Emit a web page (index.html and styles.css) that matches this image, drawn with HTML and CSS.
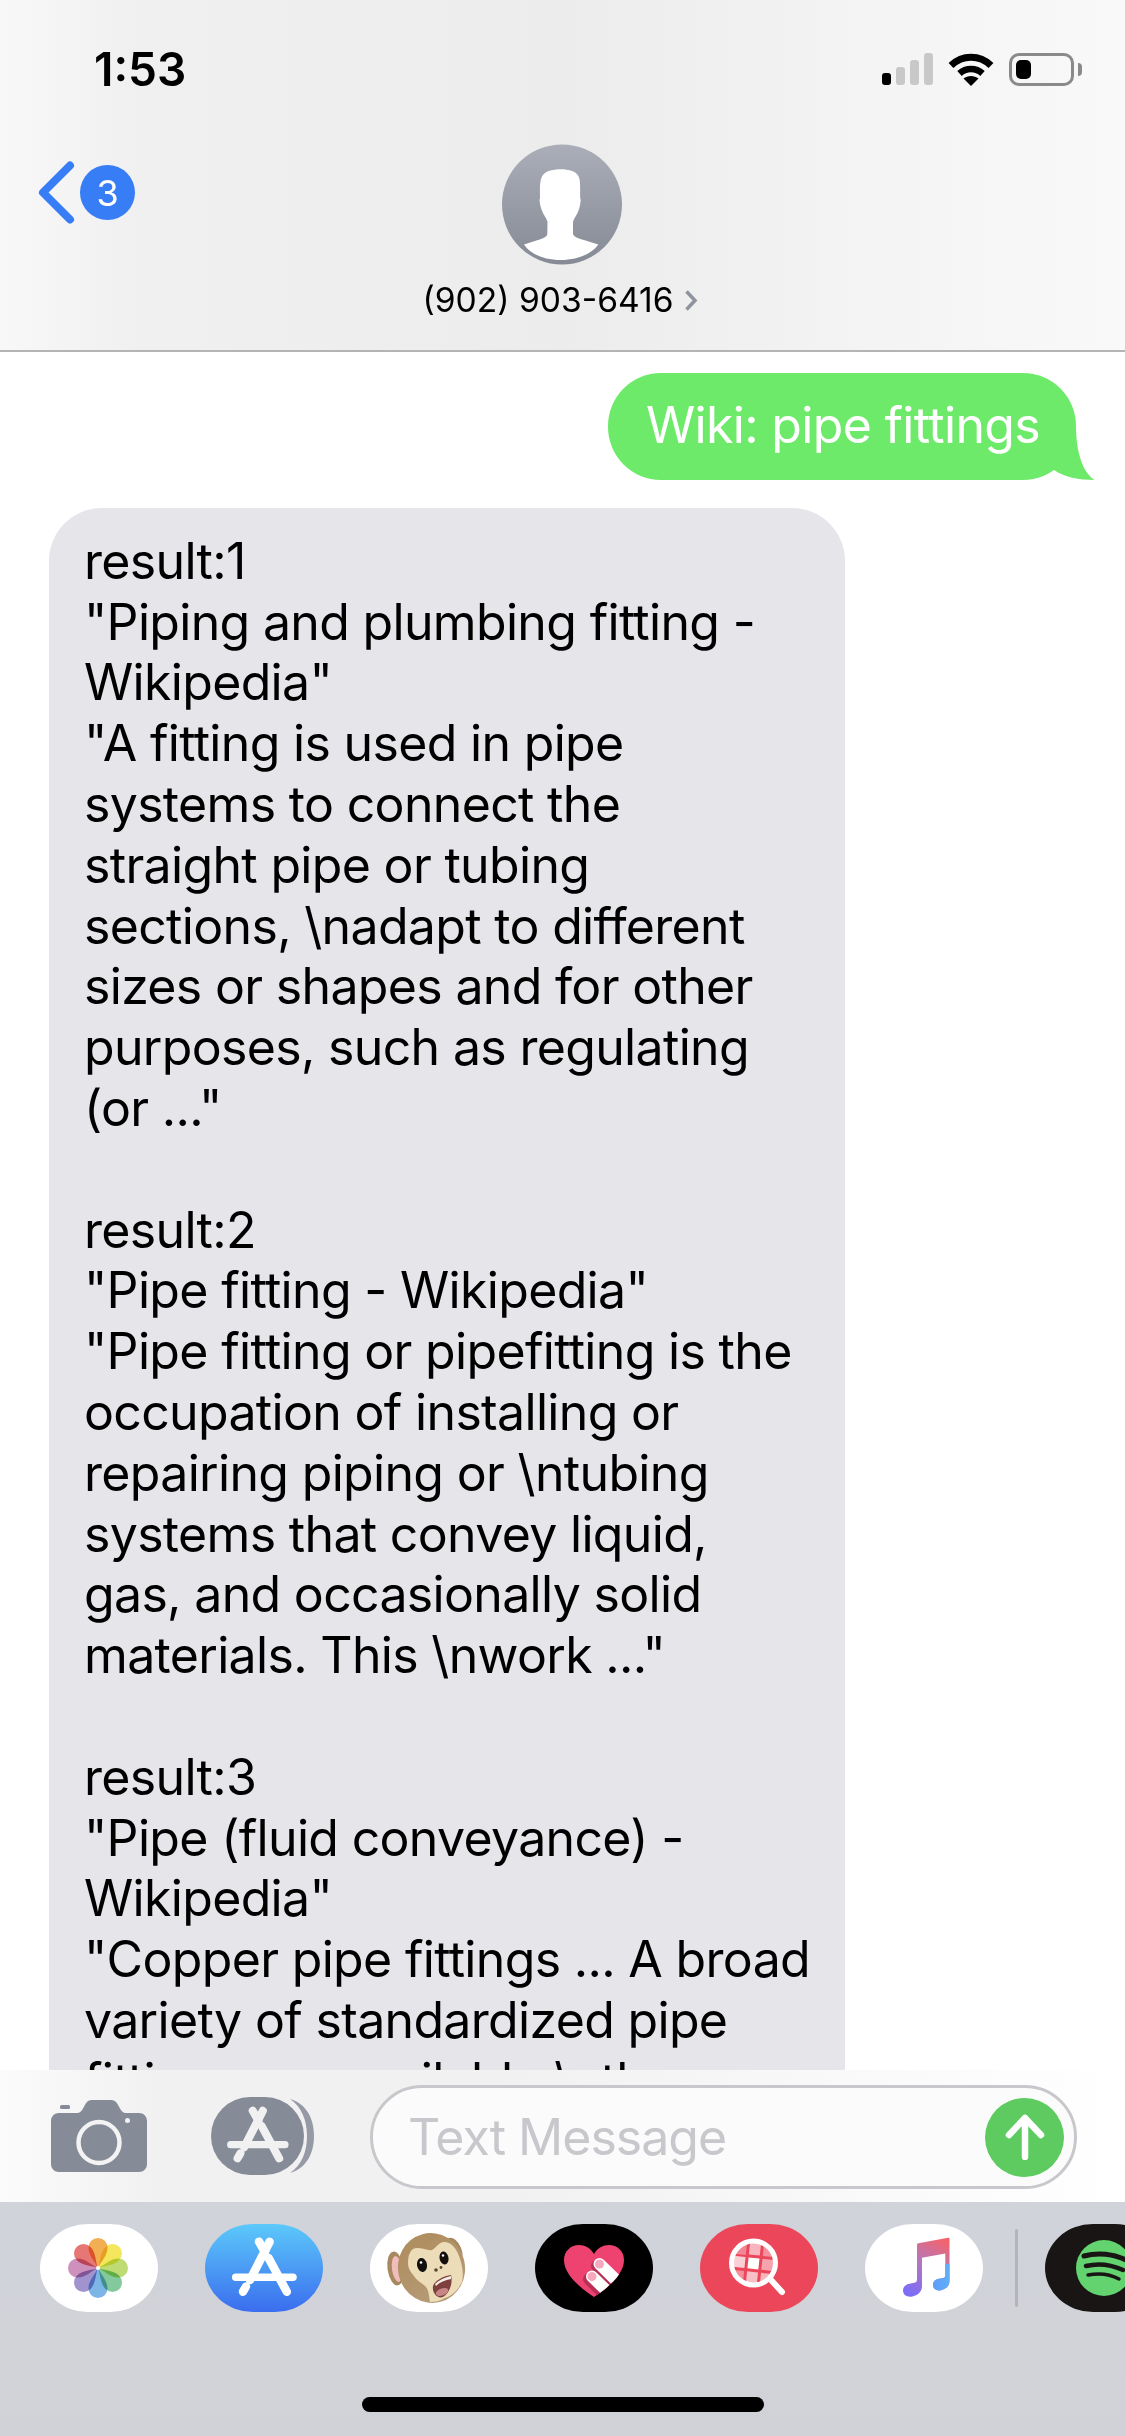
FILE: index.html
```html
<!DOCTYPE html>
<html lang="en">
<head>
    <meta charset="UTF-8">
    <meta name="viewport" content="width=device-width, initial-scale=1.0">
    <title>Messages</title>
    <link rel="stylesheet" href="styles.css">
</head>
<body>
    <svg class="defs" width="0" height="0">
        <defs>
            <symbol id="appstore" viewBox="0 0 118 88">
                <g fill="none" stroke="currentColor" stroke-width="8.5" stroke-linecap="round">
                    <path d="M54 17.7L60 28"/>
                    <path d="M64.6 17.7L45 56"/>
                    <path d="M63.6 34L81.8 67.7"/>
                    <path d="M41 62.5L38 67.7"/>
                    <path d="M30.7 53.3H88" stroke-width="7.5"/>
                </g>
            </symbol>
            <linearGradient id="avatarFill" x1="0" y1="0" x2="0" y2="1">
                <stop offset="0" stop-color="#abaeb9"/>
                <stop offset="1" stop-color="#858a95"/>
            </linearGradient>
            <linearGradient id="noteFill" x1="0.75" y1="0" x2="0.35" y2="1">
                <stop offset="0" stop-color="#f2636c"/>
                <stop offset="0.45" stop-color="#b877b8"/>
                <stop offset="1" stop-color="#7f6df5"/>
            </linearGradient>
            <linearGradient id="noteHead" x1="0" y1="0" x2="1" y2="0">
                <stop offset="0" stop-color="#5f9cf8"/>
                <stop offset="1" stop-color="#5fb0f8"/>
            </linearGradient>
            <linearGradient id="monkeyFill" x1="0" y1="0" x2="0.3" y2="1">
                <stop offset="0" stop-color="#ae8c5c"/>
                <stop offset="1" stop-color="#b59a76"/>
            </linearGradient>
        </defs>
    </svg>

    <header class="top-bar">
        <div class="status-bar">
            <span class="clock">1:53</span>
            <div class="status-icons">
                <div class="signal">
                    <span class="bar bar-1 on"></span>
                    <span class="bar bar-2"></span>
                    <span class="bar bar-3"></span>
                    <span class="bar bar-4"></span>
                </div>
                <svg class="wifi" width="46" height="33" viewBox="0 0 46 33">
                    <path d="M3 12.500C14.500 1.500 31.500 1.500 43 12.500" fill="none" stroke="#000" stroke-width="7"/>
                    <path d="M11.500 20.500C18 14.500 28 14.500 34.500 20.500" fill="none" stroke="#000" stroke-width="6.500"/>
                    <path d="M23 33L15.500 25.500C19.500 22 26.500 22 30.500 25.500Z" fill="#000"/>
                </svg>
                <div class="battery">
                    <div class="battery-body"><span class="battery-level"></span></div>
                    <span class="battery-nub"></span>
                </div>
            </div>
        </div>
        <nav class="nav-row">
            <div class="back">
                <svg class="back-arrow" width="37" height="63" viewBox="0 0 37 63">
                    <path d="M32 4.500L5 31.500L32 58.500" fill="none" stroke="#377df6" stroke-width="8" stroke-linecap="round" stroke-linejoin="round"/>
                </svg>
                <span class="badge">3</span>
            </div>
            <div class="contact">
                <svg class="avatar" width="120" height="121" viewBox="0 0 120 121">
                    <circle cx="60" cy="60.500" r="60" fill="url(#avatarFill)"/>
                    <path d="M58.700 25.300C66 25.300 76 27 77.500 35C78.500 41 78 48 78.200 54L78.700 56C78.200 62 77 66 75 70C73.500 73 71.500 75 71 78L71 90C72 93 76 94.500 82 96L96.300 100.500C90 110 75 116 58.700 116C42 116 28 110 22 100.500L36 96C41 94.500 45 93 45.300 90L45.500 78C45 75 43 73 41.500 70C39.500 66 38 62 37.500 56L38 54C38 48 37.500 41 39 35C41 27 51 25.300 58.700 25.300Z" fill="#fff"/>
                </svg>
                <div class="contact-name">
                    <span>(902) 903-6416</span>
                    <svg width="14" height="21" viewBox="0 0 14 21">
                        <path d="M2.500 1.500L11 10.500L2.500 19.500" fill="none" stroke="#8e939e" stroke-width="3.500"/>
                    </svg>
                </div>
            </div>
            <div></div>
        </nav>
    </header>

    <main class="thread">
        <div class="bubble sent">
            Wiki: pipe fittings
            <svg class="tail" width="46" height="60" viewBox="0 0 46 60">
                <path d="M27 6C27 30 33 52 45.500 60C30 60 15 57 5 50L5 20Z" fill="#6eea6b"/>
            </svg>
        </div>
        <div class="bubble received">result:1
"Piping and plumbing fitting -
Wikipedia"
"A fitting is used in pipe
systems to connect the
straight pipe or tubing
sections, \nadapt to different
sizes or shapes and for other
purposes, such as regulating
(or ..."

result:2
"Pipe fitting - Wikipedia"
"Pipe fitting or pipefitting is the
occupation of installing or
repairing piping or \ntubing
systems that convey liquid,
gas, and occasionally solid
materials. This \nwork ..."

result:3
"Pipe (fluid conveyance) -
Wikipedia"
"Copper pipe fittings ... A broad
variety of standardized pipe
fittings are available \nthe</div>
    </main>

    <section class="composer">
        <svg class="camera" width="96" height="72" viewBox="0 0 96 72">
            <path d="M8 13H26C29 13 30.500 11 32 8.500L34.500 4C36 1.500 38 0 41 0H60C63 0 65 1.500 66.500 4L69 8.500C70.500 11 72 13 75 13H88C92.500 13 96 16.500 96 21V64C96 68.500 92.500 72 88 72H8C3.500 72 0 68.500 0 64V21C0 16.500 3.500 13 8 13Z" fill="#858b97"/>
            <rect x="9" y="5" width="10" height="4" rx="1.500" fill="#858b97"/>
            <ellipse cx="48" cy="42.500" rx="20.500" ry="20.500" fill="none" stroke="#f3f3f4" stroke-width="4.500"/>
            <circle cx="76.500" cy="20.500" r="2.500" fill="#f3f3f4"/>
        </svg>
        <svg class="apps" width="105" height="78" viewBox="0 0 105 78">
            <path d="M79 2C96 7 103 22 103 39C103 56 96 71 79 76C91 68 96 54 96 39C96 24 91 10 79 2Z" fill="#959aa5"/>
            <rect x="0" y="0" width="93" height="78" rx="39" fill="#858b97"/>
            <use href="#appstore" x="-9.500" y="-3" width="112" height="83.600" color="#f1f1f2"/>
        </svg>
        <div class="message-field">
            <span class="placeholder">Text Message</span>
            <span class="send">
                <svg width="40" height="46" viewBox="0 0 40 46">
                    <path d="M20 43V4M4 21L20 4L36 21" fill="none" stroke="#fff" stroke-width="6.500" stroke-linecap="round" stroke-linejoin="round"/>
                </svg>
            </span>
        </div>
    </section>

    <footer class="drawer">
        <div class="app-row">
            <div class="tab tab-white">
                <svg width="118" height="88" viewBox="0 0 118 88">
                    <g class="petals" transform="translate(58 44)">
                        <path class="petal" transform="rotate(0)" fill="#f0a033" d="M0 0C-3 -7 -9.500 -12 -9.500 -20.500A9.500 9.500 0 0 1 9.500 -20.500C9.500 -12 3 -7 0 0Z"/>
                        <path class="petal" transform="rotate(45)" fill="#f2e342" d="M0 0C-3 -7 -9.500 -12 -9.500 -20.500A9.500 9.500 0 0 1 9.500 -20.500C9.500 -12 3 -7 0 0Z"/>
                        <path class="petal" transform="rotate(90)" fill="#b3d65a" d="M0 0C-3 -7 -9.500 -12 -9.500 -20.500A9.500 9.500 0 0 1 9.500 -20.500C9.500 -12 3 -7 0 0Z"/>
                        <path class="petal" transform="rotate(135)" fill="#6dc08a" d="M0 0C-3 -7 -9.500 -12 -9.500 -20.500A9.500 9.500 0 0 1 9.500 -20.500C9.500 -12 3 -7 0 0Z"/>
                        <path class="petal" transform="rotate(180)" fill="#66a8e2" d="M0 0C-3 -7 -9.500 -12 -9.500 -20.500A9.500 9.500 0 0 1 9.500 -20.500C9.500 -12 3 -7 0 0Z"/>
                        <path class="petal" transform="rotate(225)" fill="#8f80c6" d="M0 0C-3 -7 -9.500 -12 -9.500 -20.500A9.500 9.500 0 0 1 9.500 -20.500C9.500 -12 3 -7 0 0Z"/>
                        <path class="petal" transform="rotate(270)" fill="#c47eb0" d="M0 0C-3 -7 -9.500 -12 -9.500 -20.500A9.500 9.500 0 0 1 9.500 -20.500C9.500 -12 3 -7 0 0Z"/>
                        <path class="petal" transform="rotate(315)" fill="#e35f5c" d="M0 0C-3 -7 -9.500 -12 -9.500 -20.500A9.500 9.500 0 0 1 9.500 -20.500C9.500 -12 3 -7 0 0Z"/>
                        <circle r="2" fill="#fff"/>
                    </g>
                </svg>
            </div>
            <div class="tab tab-store">
                <svg width="118" height="88" viewBox="0 0 118 88">
                    <use href="#appstore" width="118" height="88" color="#fff"/>
                </svg>
            </div>
            <div class="tab tab-white">
                <svg width="118" height="88" viewBox="0 0 118 88">
                    <ellipse cx="25.500" cy="44.500" rx="8" ry="17" transform="rotate(-8 25.500 44.500)" fill="#a8885f"/>
                    <ellipse cx="27" cy="45" rx="5" ry="13" transform="rotate(-8 27 45)" fill="#f1bcbc"/>
                    <ellipse cx="84" cy="26.500" rx="7.500" ry="13.500" transform="rotate(-22 84 26.500)" fill="#a8885f"/>
                    <ellipse cx="83" cy="27" rx="5" ry="10.500" transform="rotate(-22 83 27)" fill="#f1bcbc"/>
                    <ellipse cx="61.500" cy="44" rx="33.500" ry="35" transform="rotate(-15 61.500 44)" fill="url(#monkeyFill)"/>
                    <path d="M38 39C38 30 41 24 47 24C53 24 58 27 62 26C66 24 69 18 74 18C81 18 86 24 89 32C92 40 94 50 92 58C88 66 82 72 75 74C70 77 65 78 60 78C59 72 59 67 56 63C52 59 47 57 44 52C41 48 38 45 38 39Z" fill="#ecdcb8"/>
                    <ellipse cx="52" cy="41" rx="5" ry="7" transform="rotate(-10 52 41)" fill="#14100e"/>
                    <ellipse cx="74" cy="34" rx="4.500" ry="6.500" transform="rotate(-10 74 34)" fill="#14100e"/>
                    <circle cx="51" cy="38.500" r="1.300" fill="#fff"/>
                    <circle cx="73" cy="31.500" r="1.200" fill="#fff"/>
                    <circle cx="66" cy="46" r="1.800" fill="#5b4433"/>
                    <circle cx="71" cy="43.500" r="1.400" fill="#5b4433"/>
                    <path d="M63 62C65 56 74 52 81 51C83 58 80 69 73 73C67 75 62 69 63 62Z" fill="#7e3f3f"/>
                    <path d="M65 60C69 56 75 53.500 81 52L81 55C75 56 70 58 66 62Z" fill="#f6efe6"/>
                    <ellipse cx="72" cy="68" rx="6.500" ry="3.500" transform="rotate(-20 72 68)" fill="#c78684"/>
                </svg>
            </div>
            <div class="tab tab-black">
                <svg width="118" height="88" viewBox="0 0 118 88">
                    <clipPath id="heartClip">
                        <path d="M59 73C44 63 29 50 29 36C29 27 36 21 44 21C50 21 55.500 24 59 30C62.500 24 68 21 74 21C82 21 89 27 89 36C89 50 74 63 59 73Z"/>
                    </clipPath>
                    <path d="M59 73C44 63 29 50 29 36C29 27 36 21 44 21C50 21 55.500 24 59 30C62.500 24 68 21 74 21C82 21 89 27 89 36C89 50 74 63 59 73Z" fill="#ee4270"/>
                    <g clip-path="url(#heartClip)" fill="none" stroke-linecap="round">
                        <path d="M62 42L86 66" stroke="#b92f55" stroke-width="12"/>
                        <path d="M54 55L72 73" stroke="#b92f55" stroke-width="12"/>
                        <path d="M64.500 40L90 65" stroke="#fff" stroke-width="12"/>
                        <path d="M57 52.500L78 73" stroke="#fff" stroke-width="12"/>
                    </g>
                    <circle cx="64.500" cy="40" r="4.500" fill="#f6a9bd"/>
                    <circle cx="57" cy="52.500" r="4.500" fill="#f6a9bd"/>
                </svg>
            </div>
            <div class="tab tab-red">
                <svg width="118" height="88" viewBox="0 0 118 88">
                    <clipPath id="lensClip"><circle cx="53.500" cy="39" r="21"/></clipPath>
                    <g clip-path="url(#lensClip)" fill="#fff">
                        <g transform="rotate(6 54 39)">
                            <rect x="32" y="18" width="13" height="14" opacity=".35"/>
                            <rect x="48" y="16" width="11" height="15" opacity=".6"/>
                            <rect x="62" y="17" width="13" height="14" opacity=".4"/>
                            <rect x="33" y="34" width="12" height="11" opacity=".75"/>
                            <rect x="48" y="34" width="11" height="11" opacity="1"/>
                            <rect x="62" y="34" width="13" height="11" opacity=".5"/>
                            <rect x="33" y="48" width="12" height="12" opacity=".4"/>
                            <rect x="48" y="48" width="11" height="13" opacity=".65"/>
                            <rect x="62" y="48" width="13" height="12" opacity=".6"/>
                        </g>
                    </g>
                    <circle cx="53.500" cy="39" r="22" fill="none" stroke="#fff" stroke-width="5"/>
                    <path d="M71 56L82 68" fill="none" stroke="#fff" stroke-width="6" stroke-linecap="round"/>
                </svg>
            </div>
            <div class="tab tab-white">
                <svg width="118" height="88" viewBox="-3 0 118 88">
                    <path d="M49 21C49 20 49.500 19.500 50.500 19.300L80 13.700C81 13.500 81.500 14 81.500 15V57C81.500 62 78 65 73 66.200C67.500 67.500 65 64 65 61C65 57.500 67.500 55.500 71 54.800L75 54C76.500 53.700 77.300 53 77.300 51.500V29.500L54 33.800V62C54 67.500 50.500 71 44.500 72.500C39 73.500 35 71 35 66.500C35 63 37.500 60.500 41.500 59.700L46 58.800C48 58.400 49 57.500 49 55.500Z" fill="url(#noteFill)"/>
                    <path d="M81.500 40V57C81.500 62 78 65 73 66.200C67.500 67.500 65 64 65 61C65 57.500 67.500 55.500 71 54.800L75 54C76.500 53.700 77.300 53 77.300 51.500V40Z" fill="url(#noteHead)"/>
                </svg>
            </div>
            <span class="separator"></span>
            <div class="tab tab-spotify">
                <svg width="118" height="88" viewBox="0 0 118 88">
                    <circle cx="59" cy="44" r="28" fill="#62d36e"/>
                    <g fill="none" stroke="#191514" stroke-linecap="round">
                        <path d="M39 32C53 28 69 30 81 36" stroke-width="5"/>
                        <path d="M41 42C53 39 67 41 78 46" stroke-width="4.500"/>
                        <path d="M43 51C53 49 65 50 74 55" stroke-width="3.500"/>
                    </g>
                </svg>
            </div>
        </div>
        <div class="home-indicator"></div>
    </footer>
</body>
</html>
```

FILE: styles.css
```css
body {
    font-family: Inter, "Liberation Sans", sans-serif;
    margin: 0;
    width: 1125px;
    height: 2436px;
    overflow: hidden;
    display: flex;
    flex-direction: column;
    background-color: #fff;
    color: #000;
}
.defs {
    position: absolute;
}

/* top */
.top-bar {
    height: 352px;
    box-sizing: border-box;
    padding-top: 52px;
    border-bottom: 2px solid #b4b4b4;
    background: linear-gradient(90deg, #f8f8f8 0, #f0f0f1 12%, #ececed 50%, #f3f3f4 75%, #f9f9f9 100%);
    flex-shrink: 0;
}
.status-bar {
    display: flex;
    justify-content: space-between;
    align-items: center;
    height: 34px;
    padding: 0 43px 0 94px;
}
.clock {
    font-size: 46px;
    font-weight: 600;
}
.status-icons {
    display: flex;
    align-items: center;
}
.signal {
    display: flex;
    align-items: flex-end;
    gap: 5px;
    height: 32px;
    margin-right: 15px;
}
.bar {
    width: 9px;
    border-radius: 3px;
    background-color: #c8c8c8;
}
.bar.on {
    background-color: #000;
}
.bar-1 { height: 12px; }
.bar-2 { height: 18px; }
.bar-3 { height: 25px; }
.bar-4 { height: 32px; }
.battery {
    display: flex;
    align-items: center;
    margin-left: 15px;
}
.battery-body {
    box-sizing: border-box;
    width: 65px;
    height: 33px;
    padding: 4px;
    border: 3px solid #8a8a8a;
    border-radius: 10px;
}
.battery-level {
    display: block;
    width: 15px;
    height: 100%;
    border-radius: 5px;
    background-color: #000;
}
.battery-nub {
    width: 4px;
    height: 13px;
    margin-left: 4px;
    border-radius: 0 4px 4px 0;
    background-color: #8a8a8a;
}
.nav-row {
    display: grid;
    grid-template-columns: 1fr auto 1fr;
    margin-top: 58px;
}
.back {
    display: flex;
    align-items: center;
    align-self: flex-start;
    gap: 5px;
    margin: 17px 0 0 38px;
}
.back-arrow {
    flex-shrink: 0;
}
.badge {
    display: flex;
    justify-content: center;
    align-items: center;
    width: 55px;
    height: 55px;
    border-radius: 50%;
    background-color: #377df6;
    color: #fff;
    font-size: 36px;
}
.contact {
    display: flex;
    flex-direction: column;
    align-items: center;
}
.contact-name {
    display: flex;
    align-items: center;
    gap: 11px;
    margin-top: 15px;
    padding-right: 4px;
    font-size: 33.6px;
    line-height: 40px;
}

/* messages */
.thread {
    flex: 1;
    min-height: 0;
    overflow: hidden;
    display: flex;
    flex-direction: column;
    padding: 21px 49px 0;
}
.bubble {
    font-size: 50px;
    letter-spacing: -0.67px;
    line-height: 60.8px;
}
.sent {
    position: relative;
    align-self: flex-end;
    padding: 22px 36px 24px 38px;
    border-radius: 53px;
    background-color: #6eea6b;
    color: #fff;
}
.tail {
    position: absolute;
    right: -19px;
    bottom: 0;
}
.received {
    flex-shrink: 0;
    box-sizing: border-box;
    width: 796px;
    margin-top: 28px;
    padding: 23px 20px 60px 35px;
    border-radius: 53px;
    background-color: #e5e5ea;
    white-space: pre;
}

/* input row */
.composer {
    display: flex;
    align-items: center;
    height: 132px;
    flex-shrink: 0;
    background: linear-gradient(90deg, #fbfbfb 0, #f1f1f2 14%, #f1f1f2 45%, #fafafa 80%, #fff 100%);
}
.camera {
    margin-left: 51px;
    flex-shrink: 0;
}
.apps {
    margin-left: 64px;
    flex-shrink: 0;
}
.message-field {
    box-sizing: border-box;
    display: flex;
    justify-content: space-between;
    align-items: center;
    width: 707px;
    height: 104px;
    margin: 2px 0 0 54px;
    padding: 0 10px 0 35px;
    border: 3px solid #c8c8cc;
    border-radius: 52px;
    background-color: #fbfbfb;
}
.placeholder {
    font-size: 50px;
    letter-spacing: -1px;
    color: #c8c8cc;
}
.send {
    display: flex;
    justify-content: center;
    align-items: center;
    width: 79px;
    height: 79px;
    border-radius: 50%;
    background-color: #5dcb5f;
}

/* app drawer */
.drawer {
    height: 234px;
    flex-shrink: 0;
    box-sizing: border-box;
    padding-top: 22px;
    background: linear-gradient(180deg, #d0d3da, #d1d2d7);
    overflow: hidden;
}
.app-row {
    display: flex;
    align-items: center;
    padding-left: 40px;
}
.tab {
    width: 118px;
    height: 88px;
    flex-shrink: 0;
    margin-right: 47px;
    border-radius: 48px / 44px;
}
.tab svg {
    display: block;
}
.tab-white { background-color: #fff; }
.tab-store { background: linear-gradient(180deg, #5cc9fa, #3a6dee); }
.tab-black { background-color: #000; }
.tab-red { background-color: #ec465b; }
.tab-spotify { background-color: #191514; }
.petal {
    opacity: .85;
    mix-blend-mode: multiply;
}
.separator {
    width: 3px;
    height: 78px;
    flex-shrink: 0;
    margin: 0 27px 0 -15px;
    border-radius: 2px;
    background-color: #b4b5ba;
}
.home-indicator {
    width: 402px;
    height: 15px;
    margin: 85px 0 0 362px;
    border-radius: 8px;
    background-color: #000;
}
```
